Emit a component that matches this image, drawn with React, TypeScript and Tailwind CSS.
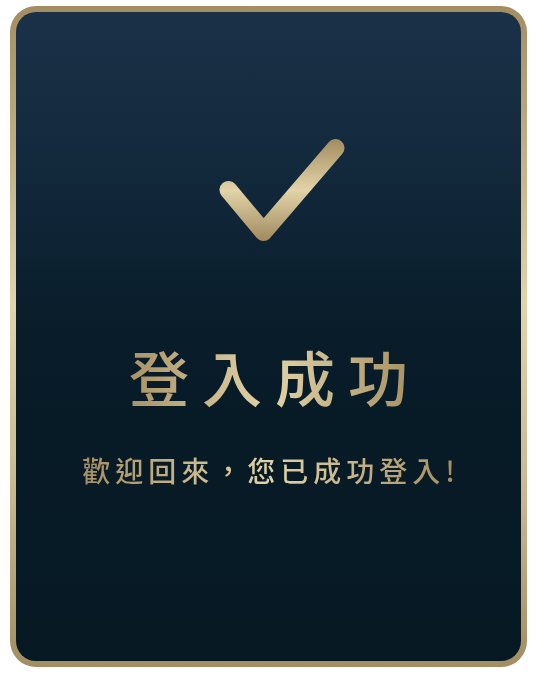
const gold = "linear-gradient(90deg, #a38c60 0%, #e2d4a8 50%, #a38c60 100%)";

function CheckMark() {
  return (
    <svg width="160" height="120" viewBox="0 0 160 120" fill="none">
      <defs>
        <linearGradient id="chk" x1="0" y1="9" x2="0" y2="111" gradientUnits="userSpaceOnUse">
          <stop offset="0" stopColor="#a38c60" />
          <stop offset="0.5" stopColor="#e2d4a8" />
          <stop offset="1" stopColor="#a08a5e" />
        </linearGradient>
      </defs>
      <path
        d="M39.5 60 L74.5 102 L146.5 18"
        stroke="url(#chk)"
        strokeWidth="18"
        strokeLinecap="round"
        strokeLinejoin="round"
      />
    </svg>
  );
}

export default function App() {
  return (
    <div className="h-[673px] w-[534px] bg-white pb-[6px] pl-[10px] pr-[7px] pt-[6px]">
      <div className="h-full w-full rounded-[26px] bg-[linear-gradient(180deg,#a48d62_0%,#e2d3a9_45%,#c9b68c_75%,#a38d63_100%)] p-[6px]">
        <div className="flex h-full w-full flex-col items-center rounded-[20px] bg-[linear-gradient(180deg,#1b3148_0%,#12283b_25%,#081c29_50%,#061923_100%)] pt-[118px] font-['Noto_Sans_CJK_TC',sans-serif]">
          <CheckMark />
          <div
            className="mt-[89px] bg-clip-text pl-[13px] text-[60px] font-medium leading-[74px] tracking-[13px] text-transparent"
            style={{ backgroundImage: gold }}
          >
            登入成功
          </div>
          <div
            className="mt-[36px] bg-clip-text pl-[5px] text-[28px] font-medium leading-[42px] tracking-[5px] text-transparent"
            style={{ backgroundImage: gold }}
          >
            歡迎回來，您已成功登入!
          </div>
        </div>
      </div>
    </div>
  );
}
